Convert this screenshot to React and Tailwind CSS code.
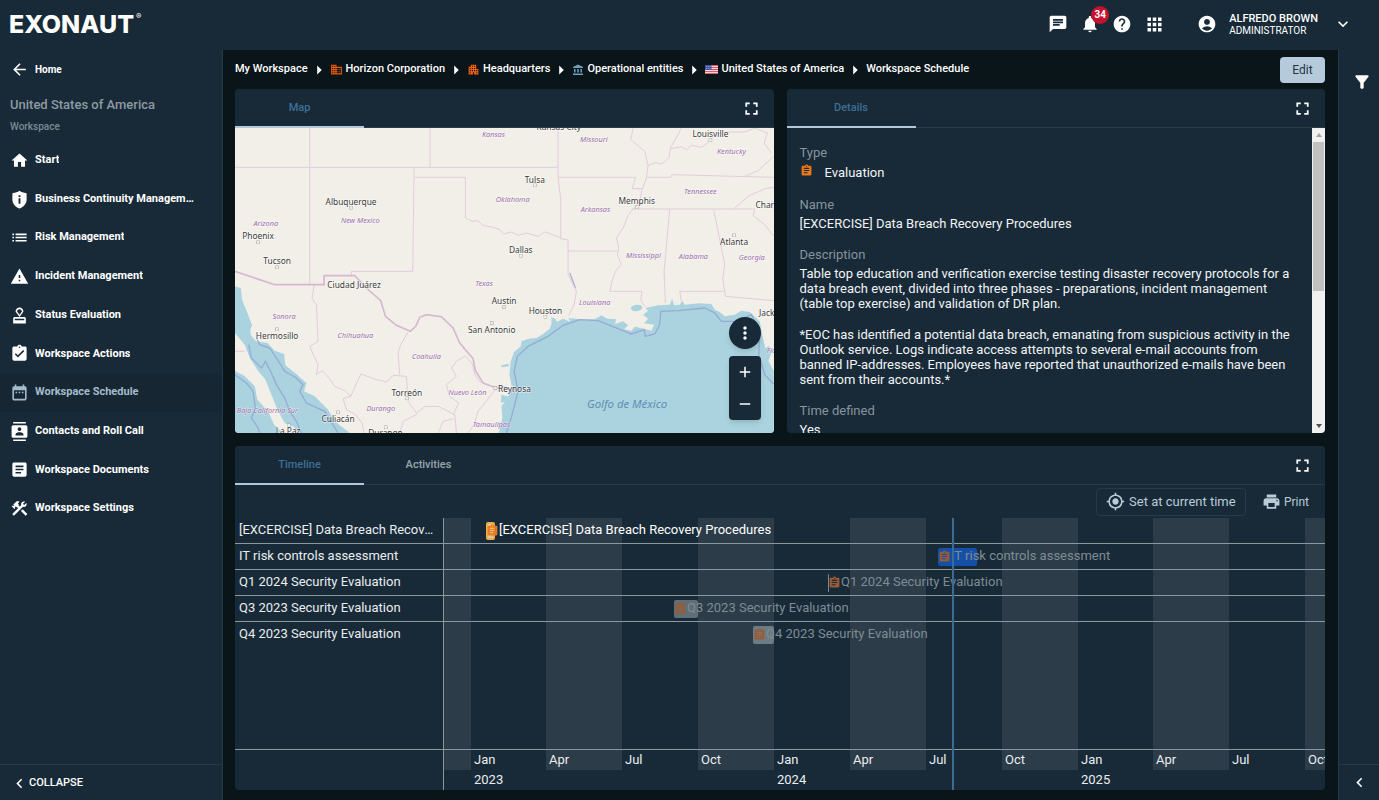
import React from 'react'
import clsx from 'clsx'
import {
  MdAccountBalance,
  MdAccountCircle,
  MdAdd,
  MdApartment,
  MdApps,
  MdArrowBack,
  MdArrowRight,
  MdArticle,
  MdAssignment,
  MdAssignmentTurnedIn,
  MdBusiness,
  MdChat,
  MdChevronLeft,
  MdConstruction,
  MdContacts,
  MdDateRange,
  MdFilterAlt,
  MdFullscreen,
  MdHelp,
  MdHome,
  MdKeyboardArrowDown,
  MdList,
  MdMoreVert,
  MdMyLocation,
  MdNotifications,
  MdOutlineApproval,
  MdPrint,
  MdRemove,
  MdWarning,
} from 'react-icons/md'

// shield with a soft top edge and a cut-out "i"
const ShieldInfo = ({ size, className }) => (
  <svg width={size} height={size} viewBox="0 0 24 24" className={className} fill="currentColor" aria-hidden="true">
    <path
      fillRule="evenodd"
      d="M12 1c2.500 1.800 5 2.500 8 2.800.6.100 1 .5 1 1.200v7c0 5.500-3.800 9.500-9 11.500C6.800 21.500 3 17.500 3 12V5c0-.7.4-1.100 1-1.200C7 3.500 9.500 2.800 12 1Zm-1.200 5.500v2.300h2.400V6.500Zm0 4v7h2.400v-7Z"
    />
  </svg>
)

const navItems = [
  { name: 'Start', icon: MdHome },
  { name: 'Business Continuity Management', icon: ShieldInfo },
  { name: 'Risk Management', icon: MdList },
  { name: 'Incident Management', icon: MdWarning },
  { name: 'Status Evaluation', icon: MdOutlineApproval },
  { name: 'Workspace Actions', icon: MdAssignmentTurnedIn },
  { name: 'Workspace Schedule', icon: MdDateRange, active: true },
  { name: 'Contacts and Roll Call', icon: MdContacts },
  { name: 'Workspace Documents', icon: MdArticle },
  { name: 'Workspace Settings', icon: MdConstruction },
]

const UsFlag = () => (
  <svg width="13" height="9" viewBox="0 0 26 18" aria-hidden="true">
    <rect width="26" height="18" fill="#f3eeee" />
    <path d="M0 1.3h26M0 5.2h26M0 9h26M0 12.8h26M0 16.7h26" stroke="#d9455a" strokeWidth="2" />
    <rect width="13" height="10" fill="#4057a5" />
    <path d="M2 3h9M2 7h9" stroke="#9aa9d8" strokeWidth="1.5" strokeDasharray="2 1.5" />
  </svg>
)

const crumbs = [
  { name: 'My Workspace' },
  { name: 'Horizon Corporation', icon: <MdBusiness size={13} className="text-[#e8590c]" /> },
  { name: 'Headquarters', icon: <MdApartment size={13} className="text-[#f0600f]" /> },
  { name: 'Operational entities', icon: <MdAccountBalance size={12} className="text-[#6f9fbe]" /> },
  { name: 'United States of America', icon: <UsFlag /> },
  { name: 'Workspace Schedule' },
]

// width is the share of the axis the quarter takes up
const quarters = [
  { label: '', width: 27, shaded: true },
  { label: 'Jan', year: '2023', width: 75 },
  { label: 'Apr', width: 76, shaded: true },
  { label: 'Jul', width: 76 },
  { label: 'Oct', width: 76, shaded: true },
  { label: 'Jan', year: '2024', width: 76 },
  { label: 'Apr', width: 76, shaded: true },
  { label: 'Jul', width: 76 },
  { label: 'Oct', width: 76, shaded: true },
  { label: 'Jan', year: '2025', width: 75 },
  { label: 'Apr', width: 76, shaded: true },
  { label: 'Jul', width: 76 },
  { label: 'Oct', width: 20, shaded: true },
]

const axisTotal = quarters.reduce((sum, q) => sum + q.width, 0)
const pct = (value) => `${(value / axisTotal) * 100}%`

const rows = [
  { name: '[EXCERCISE] Data Breach Recovery Procedures', start: 42, length: 9, bar: 'bg-[#d9c9a3] border-2 border-[#e8b04a]', current: true },
  { name: 'IT risk controls assessment', start: 494, length: 39, bar: 'bg-[#1450a8]' },
  { name: 'Q1 2024 Security Evaluation', start: 384, length: 1, bar: 'bg-[#7d8a93]' },
  { name: 'Q3 2023 Security Evaluation', start: 230, length: 24, bar: 'bg-[#5f6e77]' },
  { name: 'Q4 2023 Security Evaluation', start: 309, length: 21, bar: 'bg-[#6d7b83]' },
]

const cities = [
  ['Kansas City', 972, 6, 0, 0],
  ['Louisville', 1427, 27, 1427, 37],
  ['Tulsa', 900, 164, 900, 172],
  ['Albuquerque', 349, 232, 349, 239],
  ['Memphis', 1206, 228, 1206, 238],
  ['Phoenix', 70, 334, 70, 343],
  ['Tucson', 127, 409, 127, 418],
  ['Charlotte', 1617, 241, 0, 0],
  ['Atlanta', 1498, 352, 1498, 322],
  ['Dallas', 858, 376, 858, 383],
  ['Ciudad Juárez', 358, 481, 0, 0],
  ['Austin', 808, 528, 808, 537],
  ['Houston', 932, 558, 932, 566],
  ['Hermosillo', 127, 633, 127, 604],
  ['San Antonio', 771, 615, 771, 585],
  ['Reynosa', 839, 792, 782, 780],
  ['Torreón', 516, 804, 516, 811],
  ['Culiacán', 310, 883, 310, 853],
  ['La Paz', 160, 918, 162, 892],
  ['Durango', 452, 925, 453, 898],
  ['Jacksonville', 1640, 564, 0, 0],
]

const states = [
  ['Kansas', 776, 26],
  ['Missouri', 1077, 41],
  ['Kentucky', 1490, 79],
  ['Tennessee', 1397, 198],
  ['Oklahoma', 834, 221],
  ['Arkansas', 1082, 251],
  ['New Mexico', 377, 286],
  ['Arizona', 93, 294],
  ['Mississippi', 1226, 389],
  ['Alabama', 1376, 392],
  ['Georgia', 1551, 396],
  ['Texas', 748, 474],
  ['Louisiana', 1080, 530],
  ['Sonora', 148, 572],
  ['Chihuahua', 362, 631],
  ['Coahuila', 575, 692],
  ['Nuevo León', 698, 801],
  ['Durango', 438, 848],
  ['Baja California Sur', 98, 855],
  ['Tamaulipas', 770, 897],
  ['Florida', 1630, 675],
]

const PanelTab = ({ children, active }) => (
  <button
    role="tab"
    aria-selected={!!active}
    className={clsx(
      'w-[129px] h-[39px] pt-0.5 text-[11px] font-medium border-b-2 -mb-px',
      active ? 'text-[#3e6f96] border-[#b3c8dc]' : 'text-[#9aa5ad] border-transparent'
    )}
  >
    {children}
  </button>
)

const PanelHeader = ({ children }) => (
  <div className="h-[39px] shrink-0 flex items-center justify-between pr-3 border-b border-[#263a47]">
    <div role="tablist" className="flex">{children}</div>
    <button aria-label="Fullscreen" className="text-white">
      <MdFullscreen size={21} />
    </button>
  </div>
)

const RegionMap = () => (
  <svg
    viewBox="0 0 1617 915"
    preserveAspectRatio="xMidYMid slice"
    className="w-full h-full block bg-[#f2efe9]"
    role="img"
    aria-label="Map of southern United States and Mexico"
  >
    {/* water */}
    <g fill="#aad3df">
      <path d="M792 915 803 870 800 835 815 815 832 780 824 740 828 700 838 672 858 655 860 640 882 632 905 630 925 618 945 602 950 588 950 568 962 572 966 582 985 572 1008 582 1000 570 1040 574 1080 574 1100 562 1118 572 1145 574 1140 588 1165 580 1180 592 1168 604 1190 608 1200 596 1228 602 1250 608 1258 590 1228 586 1240 572 1225 560 1240 548 1232 540 1270 532 1305 530 1312 512 1318 532 1335 530 1342 518 1350 530 1392 526 1430 528 1440 545 1455 552 1470 565 1500 560 1520 548 1545 552 1575 580 1582 620 1592 660 1590 690 1598 720 1617 745V915Z" />
      <path d="M1188 540q10-14 30-8 12 10-6 16-20 6-24-8Z" />
      <path d="M0 475 18 480 22 515 38 555 55 600 48 622 64 640 98 645 120 668 148 678 152 712 185 738 215 765 208 790 240 805 280 845 300 880 345 915H192L175 895 150 885 130 850 110 800 92 755 70 728 45 690 30 650 0 615Z" />
      <path d="M0 728 30 745 60 775 68 815 100 850 118 890 145 915H0Z" />
      <path d="M800 712l22-5v8l-22 3ZM800 800l24 6-6 14-20 4Z" />
      <path d="M1585 665l18-12 8 20-10 26 16 30v15l-24-30Z" />
    </g>
    <ellipse cx="55" cy="608" rx="8" ry="16" fill="#f2efe9" />
    {/* territorial waters */}
    <g fill="none" stroke="#8f9fd0" strokeWidth="4" opacity=".75">
      <path d="M815 915 832 860 850 790 838 730 848 685 880 655 940 625 985 592 1035 575 1090 578 1150 602 1190 618 1228 605 1232 625 1260 618 1275 590 1278 550 1330 548 1410 540 1440 555 1460 580 1500 580 1550 560 1575 610 1572 680 1590 740 1617 768" />
      <path d="M42 650 50 690 80 720 92 700 110 735 125 770 150 810 165 850 185 880 200 915M65 630 75 650 105 660 125 690 150 730 185 750 205 770 195 790 215 825 270 850 310 915M0 740 35 765 55 790 62 840 50 870 70 900 75 915" />
      <path d="M1005 435 1022 480" />
    </g>
    {/* state borders */}
    <g fill="none" stroke="#e3cbdc" strokeWidth="3">
      <path d="M225 0V470M0 118H970M586 0V118M538 118 534 430H350V443M538 148H692V270L712 280 728 278 745 292 775 298 795 305 805 318 830 312 850 322 875 315 910 325 930 312 960 322 978 330" />
      <path d="M970 0V148H1203L1192 182H1222M970 148 978 215V332L1000 336V440L1025 490 1018 530 1002 562M1000 369H1148" />
      <path d="M1195 0 1188 35 1230 70 1240 112 1262 104 1282 108 1302 90 1308 58 1330 20 1340 0M1308 62 1340 56 1355 66 1370 52 1400 58 1425 40 1440 20 1480 12 1530 12 1560 0M1240 112 1235 150 1222 185 1215 220 1180 262 1165 300 1145 330 1152 360 1148 380 1160 410 1142 430 1132 460 1125 490H1222L1218 515 1230 535" />
      <path d="M1235 148H1308L1312 140 1617 148M1530 145 1570 128 1617 85M1190 243H1560M1500 240 1540 205 1590 182 1617 178M1560 245 1555 262 1590 290 1617 325M1305 243 1288 430 1292 525M1437 247 1470 410 1464 450 1472 505 1617 518M1467 490H1335L1340 520" />
      <path d="M1560 0 1598 15 1588 45 1610 75M238 470 232 512 245 530 250 640 225 656 250 710 245 740 262 728 285 752 300 775 330 788 348 805 378 738 425 755 456 762 475 742 515 745 520 820 545 855 570 836 610 835 660 860 665 915M348 805 325 812 335 845 360 858 382 885 388 915M520 612 498 650 490 675 495 740M785 780 770 800 730 850 718 890 700 915M548 858 505 880 495 915M690 685 665 700 650 720 665 745 635 770 645 805 672 825 655 860M690 685 712 705 720 740 738 765M0 670H30M610 915 625 880 655 872" />
    </g>
    {/* national border */}
    <path
      d="M0 430 120 470H268V443H360L395 480 438 518 452 565 485 592 527 610 543 595 555 568 575 560 620 566 655 600 675 645 715 692 722 728 745 765 785 780 812 778 840 795"
      fill="none"
      stroke="#cfa9cd"
      strokeWidth="5"
      opacity=".8"
    />
    <g fontFamily="'Noto Sans', sans-serif" textAnchor="middle" paintOrder="stroke" stroke="#ffffff" strokeOpacity=".6">
      <g fontSize="22" fontStyle="italic" fill="#9a6ba8" strokeWidth="3">
        {states.map(([name, x, y]) => (
          <text key={`${name}-${x}`} x={x} y={y}>{name}</text>
        ))}
      </g>
      <text x="1177" y="840" fontSize="34" fontStyle="italic" fill="#5f8fb5" stroke="none">Golfo de México</text>
      <g fontSize="25" fill="#3a3a3a" strokeWidth="4">
        {cities.map(([name, x, y, dotX, dotY]) => (
          <React.Fragment key={name}>
            {dotX > 0 && <rect x={dotX - 4} y={dotY - 4} width="8" height="8" fill="#f2efe9" stroke="#8a8a8a" strokeWidth="2" strokeOpacity="1" />}
            <text x={x} y={y}>{name}</text>
          </React.Fragment>
        ))}
      </g>
    </g>
  </svg>
)

const Header = () => (
  <header className="h-[50px] shrink-0 flex items-center justify-between pb-0.5 pl-[9px] pr-[26px]">
    <a href="#" className="flex items-start text-white font-['Inter',sans-serif] font-extrabold text-[25px] leading-7">
      EXONAUT
      <span className="ml-0.5 text-[8px] leading-3 font-normal">®</span>
    </a>
    <div className="flex items-center text-white">
      <div className="flex items-center gap-3">
        <button aria-label="Messages"><MdChat size={20} /></button>
        <button aria-label="Notifications" className="relative">
          <MdNotifications size={20} />
          <span className="absolute -top-2 left-[11px] w-[18px] h-[18px] rounded-full bg-[#c4122f] text-[10px] leading-[18px] font-bold text-center">
            34
          </span>
        </button>
        <button aria-label="Help"><MdHelp size={20} /></button>
        <button aria-label="Apps"><MdApps size={21} /></button>
      </div>
      <button className="ml-8 flex items-center text-left">
        <MdAccountCircle size={20} />
        <span className="ml-3 mr-[15px] pt-0.5 text-[11px] leading-3 font-medium">
          <span className="block">ALFREDO BROWN</span>
          <span className="block text-[10px] font-normal">ADMINISTRATOR</span>
        </span>
        <MdKeyboardArrowDown size={20} />
      </button>
    </div>
  </header>
)

const Sidebar = () => (
  <aside className="w-[223px] shrink-0 flex flex-col border-r border-[#263a47] text-white text-[11px] font-bold">
    <a href="#" className="h-[39px] pl-[10px] flex items-center gap-[6px] text-[10px]">
      <MdArrowBack size={19} />
      Home
    </a>
    <div className="px-[10px] pt-2 h-[52px]">
      <p className="text-[13px] leading-4 font-medium text-[#8d9aa3]">United States of America</p>
      <p className="mt-2 text-[10px] leading-3 font-medium text-[#7c8a94]">Workspace</p>
    </div>
    <nav className="h-[387px] grid grid-rows-10">
      {navItems.map(({ name, icon: Icon, active }) => (
        <a
          key={name}
          href="#"
          className={clsx('pl-[10px] pr-6 flex items-center gap-[6px] min-w-0', active && 'bg-[#162733] text-[#a3bccb]')}
        >
          <Icon size={19} className="shrink-0" />
          <span className="truncate">{name}</span>
        </a>
      ))}
    </nav>
    <button className="mt-auto h-9 pt-0.5 pl-[10px] flex items-center border-t border-[#263a47] font-medium">
      <MdChevronLeft size={19} />
      COLLAPSE
    </button>
  </aside>
)

const Breadcrumbs = () => (
  <div className="h-[39px] shrink-0 flex items-center justify-between">
    <nav aria-label="Breadcrumb" className="flex items-center text-white text-[11px] font-medium">
      {crumbs.map((crumb, i) => (
        <React.Fragment key={crumb.name}>
          {i > 0 && <MdArrowRight size={22} />}
          <a href="#" className="flex items-center gap-[3px]">
            {crumb.icon}
            {crumb.name}
          </a>
        </React.Fragment>
      ))}
    </nav>
    <button className="w-[45px] h-[26px] rounded-sm bg-[#b5cadb] text-[#25343f] text-xs">Edit</button>
  </div>
)

const MapPanel = () => (
  <section className="rounded bg-[#182a37] overflow-hidden flex flex-col">
    <PanelHeader>
      <PanelTab active>Map</PanelTab>
    </PanelHeader>
    <div className="relative flex-1 min-h-0">
      <RegionMap />
      <div className="absolute right-[13px] bottom-[13px] flex flex-col items-center gap-[7px] text-white">
        <button aria-label="Map options" className="size-8 rounded-full bg-[#182a37] shadow-md flex items-center justify-center">
          <MdMoreVert size={20} />
        </button>
        <div className="w-8 rounded bg-[#182a37] shadow-md flex flex-col">
          <button aria-label="Zoom in" className="h-8 flex items-center justify-center"><MdAdd size={18} /></button>
          <button aria-label="Zoom out" className="h-8 flex items-center justify-center"><MdRemove size={18} /></button>
        </div>
      </div>
    </div>
  </section>
)

const Detail = ({ label, children }) => (
  <div className="mb-4">
    <dt className="mb-1 text-[#87949d] leading-[15px]">{label}</dt>
    <dd className="text-[#f1f4f6] leading-[15px]">{children}</dd>
  </div>
)

const DetailsPanel = () => (
  <section className="rounded bg-[#182a37] overflow-hidden flex flex-col">
    <PanelHeader>
      <PanelTab active>Details</PanelTab>
    </PanelHeader>
    <div className="flex-1 min-h-0 flex">
      <dl className="flex-1 h-full overflow-hidden pl-[13px] pr-3 pt-[17px] text-[13px]">
        <Detail label="Type">
          <span className="flex gap-3 leading-[17px]">
            <MdAssignment size={13} className="text-[#f07818]" />
            Evaluation
          </span>
        </Detail>
        <Detail label="Name">[EXCERCISE] Data Breach Recovery Procedures</Detail>
        <Detail label="Description">
          <p>
            Table top education and verification exercise testing disaster recovery protocols for a
            data breach event, divided into three phases - preparations, incident management
            (table top exercise) and validation of DR plan.
          </p>
          <p className="mt-4">
            *EOC has identified a potential data breach, emanating from suspicious activity in the
            Outlook service. Logs indicate access attempts to several e-mail accounts from
            banned IP-addresses. Employees have reported that unauthorized e-mails have been
            sent from their accounts.*
          </p>
        </Detail>
        <Detail label="Time defined">Yes</Detail>
      </dl>
      <div aria-hidden="true" className="w-[13px] bg-[#f1f1f1] flex flex-col items-center">
        <span className="h-[14px] flex items-center">
          <svg width="6" height="4" viewBox="0 0 6 4"><path d="M0 4 3 0l3 4Z" fill="#a3a3a3" /></svg>
        </span>
        <span className="w-[11px] h-[149px] bg-[#c1c1c1]" />
        <span className="mt-auto h-[14px] flex items-center">
          <svg width="6" height="4" viewBox="0 0 6 4"><path d="M0 0 3 4l3-4Z" fill="#505050" /></svg>
        </span>
      </div>
    </div>
  </section>
)

const TimelineRow = ({ row, last }) => (
  <div className={clsx('flex', last ? 'flex-1' : 'h-[26px] border-b border-[#8c979e]')}>
    <div className="w-[208px] shrink-0 px-1 text-[#e9edf0] leading-6 truncate">{row.name}</div>
    <div className="flex-1 relative ml-px">
      <div
        className={clsx('absolute top-1 h-[18px] rounded-xs', row.bar)}
        style={{ left: pct(row.start), width: pct(row.length) }}
      />
      <div
        className={clsx('absolute top-0 flex items-center leading-6 whitespace-nowrap', row.current ? 'text-white' : 'text-[#7f8c94]')}
        style={{ left: pct(row.start) }}
      >
        <MdAssignment size={13} className={row.current ? 'text-[#f07818]' : 'text-[#9a5a33]'} />
        {row.name}
      </div>
    </div>
  </div>
)

const TimelinePanel = () => (
  <section className="flex-1 min-h-0 rounded bg-[#182a37] overflow-hidden flex flex-col">
    <PanelHeader>
      <PanelTab active>Timeline</PanelTab>
      <PanelTab>Activities</PanelTab>
    </PanelHeader>
    <div className="h-[33px] shrink-0 flex items-center justify-end gap-4 pr-4 text-[#b9ccd8]">
      <button className="w-[150px] h-7 flex items-center justify-center gap-1 rounded-sm border border-[#263a47] text-[13px]">
        <MdMyLocation size={19} />
        Set at current time
      </button>
      <button className="flex items-center gap-[3px] text-xs">
        <MdPrint size={19} />
        Print
      </button>
    </div>
    <div className="relative flex-1 min-h-0 flex flex-col text-[13px]">
      {/* quarter bands behind the rows */}
      <div className="absolute inset-y-0 left-[208px] right-0 flex border-l border-[#8c979e] text-[#e9edf0]">
        {quarters.map((q, i) => (
          <div key={i} className="flex flex-col min-w-0" style={{ width: pct(q.width) }}>
            <div className={clsx('flex-1 flex items-end overflow-hidden pl-[3px] leading-5', q.shaded && 'bg-[#2c3c48]')}>
              {q.label}
            </div>
            <div className="h-5 pl-[3px] leading-5">{q.year}</div>
          </div>
        ))}
      </div>
      <div className="relative flex-1 flex flex-col">
        {rows.map((row, i) => (
          <TimelineRow key={row.name} row={row} last={i === rows.length - 1} />
        ))}
      </div>
      <div className="relative h-[41px] border-t border-[#8c979e]" />
      <div className="absolute inset-y-0 left-[209px] right-0 pointer-events-none">
        <div className="absolute inset-y-0 w-[2px] bg-[#3b6c93]" style={{ left: pct(508) }} />
      </div>
    </div>
  </section>
)

const App = () => {
  return (
    <div className="h-screen flex flex-col overflow-hidden bg-[#182a37] font-['Roboto',sans-serif]">
      <Header />
      <div className="flex-1 min-h-0 flex">
        <Sidebar />
        <main className="flex-1 min-w-0 flex flex-col bg-[#0a151a] pl-3 pr-[13px] pb-[10px]">
          <Breadcrumbs />
          <div className="h-[344px] shrink-0 grid grid-cols-2 gap-[13px] mb-[13px]">
            <MapPanel />
            <DetailsPanel />
          </div>
          <TimelinePanel />
        </main>
        <aside className="w-[41px] shrink-0 flex flex-col items-center justify-between border-l border-[#263a47] text-white">
          <button aria-label="Filter" className="mt-[22px] pl-[5px]"><MdFilterAlt size={20} /></button>
          <button aria-label="Expand panel" className="w-full h-9 flex items-center justify-center border-t border-[#263a47]">
            <MdChevronLeft size={19} />
          </button>
        </aside>
      </div>
    </div>
  )
}

export default App
